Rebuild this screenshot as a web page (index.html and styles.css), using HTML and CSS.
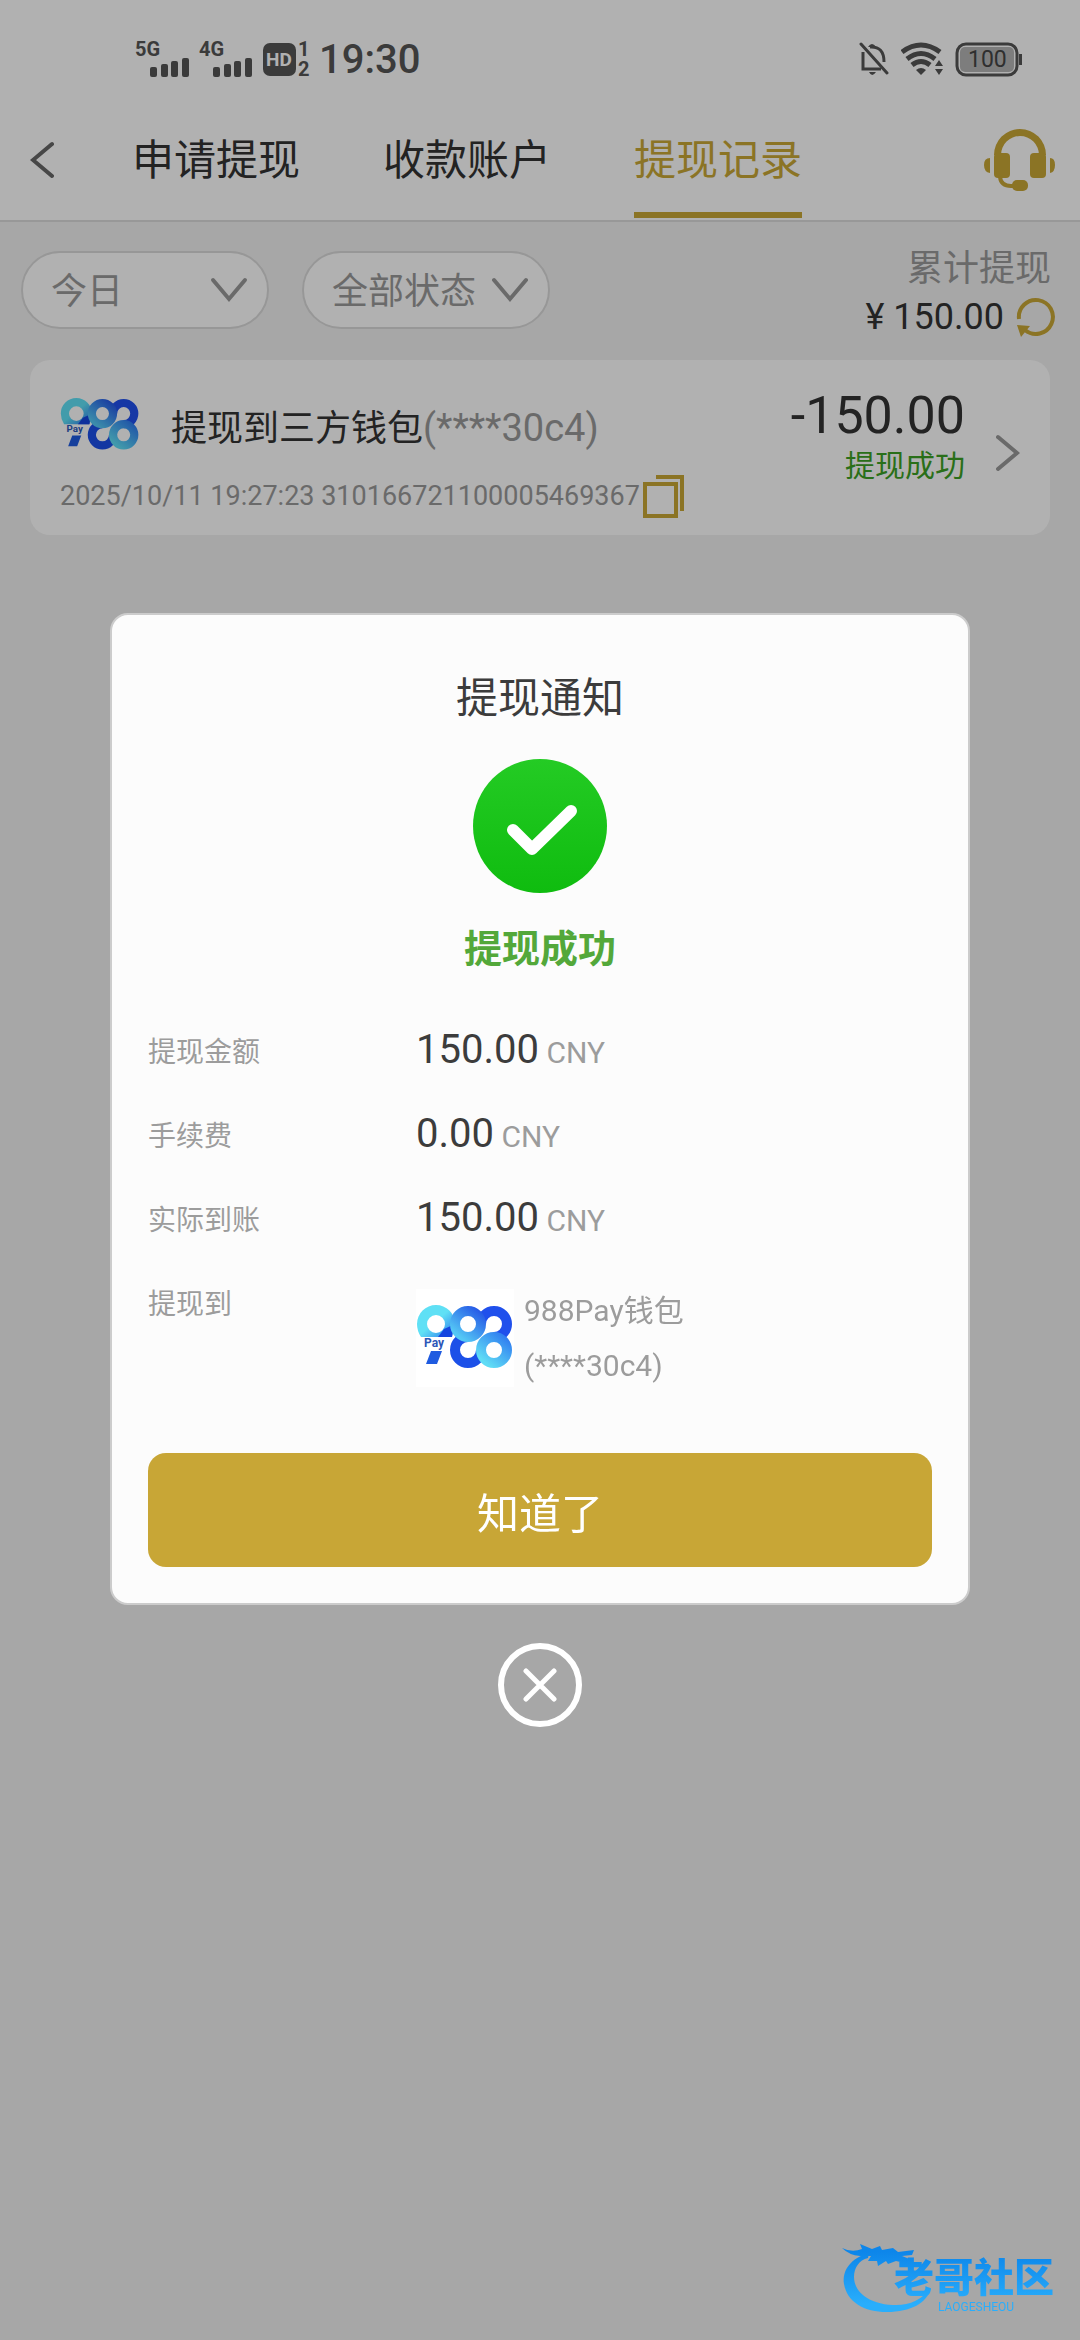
FILE: index.html
```html
<!DOCTYPE html>
<html lang="zh-CN">
<head>
    <meta charset="UTF-8">
    <meta name="viewport" content="width=device-width, initial-scale=1.0">
    <title>提现记录</title>
    <link rel="stylesheet" href="styles.css">
</head>
<body>
    <!-- shared 988Pay logo -->
    <svg class="defs" width="0" height="0" aria-hidden="true">
        <defs>
            <linearGradient id="gNine" x1="0" y1="0" x2="1" y2="1">
                <stop offset="0.5" stop-color="#5fe0f5"/>
                <stop offset="0.8" stop-color="#3f9df0"/>
                <stop offset="1" stop-color="#1546e0"/>
            </linearGradient>
            <linearGradient id="gMid" x1="1" y1="0" x2="0.2" y2="1">
                <stop offset="0" stop-color="#2558e6"/>
                <stop offset="1" stop-color="#55c8f5"/>
            </linearGradient>
            <linearGradient id="gLow" x1="1" y1="0" x2="0.2" y2="1">
                <stop offset="0" stop-color="#2f7cf0"/>
                <stop offset="1" stop-color="#5fdcf5"/>
            </linearGradient>
            <symbol id="logo988" viewBox="0 0 98 98">
                <path d="M5 48Q1 42 1 35A19 19 0 0 1 39 35L36 48ZM20 26a9 9 0 1 0 0 18a9 9 0 1 0 0-18Z" fill="url(#gNine)" fill-rule="evenodd"/>
                <path d="M22 48L28 40L37 36L36 48Z" fill="#1546e0"/>
                <path d="M65 35A13 13 0 1 1 78 48" fill="none" stroke="#2050ec" stroke-width="10"/>
                <path d="M52 48A13 13 0 1 0 65 61" fill="none" stroke="#1c50e8" stroke-width="10"/>
                <circle cx="52" cy="35" r="13" fill="none" stroke="url(#gMid)" stroke-width="10"/>
                <circle cx="78" cy="61" r="13" fill="none" stroke="url(#gLow)" stroke-width="10"/>
                <text x="8" y="58" class="logo-pay">Pay</text>
                <path d="M15 62H26L21 75H10Z" fill="#1f5be0"/>
            </symbol>
        </defs>
    </svg>

    <header class="header">
        <div class="statusbar">
            <div class="status-left">
                <svg class="signal" viewBox="0 -6 56 48">
                    <text x="0" y="15" class="net">5G</text>
                    <rect x="15" y="26" width="7" height="10" rx="2"/>
                    <rect x="26" y="23" width="7" height="13" rx="2"/>
                    <rect x="36" y="20" width="7" height="16" rx="2"/>
                    <rect x="47" y="17" width="7" height="19" rx="2"/>
                </svg>
                <svg class="signal" viewBox="0 -6 56 48">
                    <text x="0" y="15" class="net">4G</text>
                    <rect x="14" y="26" width="7" height="10" rx="2"/>
                    <rect x="25" y="23" width="7" height="13" rx="2"/>
                    <rect x="35" y="20" width="7" height="16" rx="2"/>
                    <rect x="46" y="17" width="7" height="19" rx="2"/>
                </svg>
                <svg class="hd" viewBox="0 -6 48 48">
                    <rect x="0" y="2" width="33" height="33" rx="7"/>
                    <text x="3" y="25" class="hd-text">HD</text>
                    <text x="35" y="15" class="net">1</text>
                    <text x="35" y="35" class="net">2</text>
                </svg>
                <span class="clock">19:30</span>
            </div>
            <div class="status-right">
                <svg width="30" height="34" viewBox="0 0 30 34" fill="none" stroke="#555" stroke-width="3">
                    <path d="M4 10V27H22M11 5Q25 4 25 20"/>
                    <path d="M2 2L28 31" stroke-linecap="round"/>
                    <path d="M9 5Q13 -1 17 5Z" fill="#555" stroke="none"/>
                    <path d="M10 30Q13 36 17 30Z" fill="#555" stroke="none"/>
                </svg>
                <svg width="42" height="34" viewBox="0 0 42 34" fill="none" stroke="#555" stroke-width="5">
                    <path d="M1 10Q20 -4 39 10M6 17Q20 6 34 17M11 23Q20 16 29 23"/>
                    <path d="M15 28Q20 24 25 28L20 33Z" fill="#555" stroke="none"/>
                    <path d="M34 24L38 18L42 24ZM34 27L38 33L42 27Z" fill="#555" stroke="none"/>
                </svg>
                <svg width="68" height="36" viewBox="0 0 68 36">
                    <rect x="2" y="3" width="60" height="31" rx="9" fill="none" stroke="#555" stroke-width="3"/>
                    <rect x="5" y="6" width="54" height="25" rx="5" fill="#b4b4b4"/>
                    <path d="M64 13h3v11h-3z" fill="#555"/>
                    <text x="13" y="26" class="battery">100</text>
                </svg>
            </div>
        </div>
        <nav class="nav">
            <button class="back" aria-label="返回">
                <svg width="24" height="38" viewBox="0 0 24 38"><path d="M22 3L3 19L22 35"/></svg>
            </button>
            <div class="tabs">
                <a href="#apply">申请提现</a>
                <a href="#account">收款账户</a>
                <a href="#record" class="active">提现记录</a>
            </div>
            <button class="service" aria-label="客服">
                <svg width="72" height="62" viewBox="0 0 72 62" fill="#c8a636">
                    <path d="M10 26A26 26 0 0 1 62 26H55A19 19 0 0 0 17 26Z"/>
                    <rect x="10" y="24" width="16" height="25" rx="4"/>
                    <rect x="46" y="24" width="16" height="25" rx="4"/>
                    <path d="M6 29V44Q0 43 0 36T6 29ZM66 29V44Q71 43 71 36T66 29Z"/>
                    <path d="M16 48Q17 57 27 57H32" fill="none" stroke="#c8a636" stroke-width="4"/>
                    <rect x="28" y="51" width="16" height="11" rx="5"/>
                </svg>
            </button>
        </nav>
    </header>

    <main>
        <div class="filters">
            <div class="select-box">
                <select aria-label="日期"><option>今日</option></select>
                <svg width="38" height="26" viewBox="0 0 38 26"><path d="M3 3L19 22L35 3"/></svg>
            </div>
            <div class="select-box">
                <select aria-label="状态"><option>全部状态</option></select>
                <svg width="38" height="26" viewBox="0 0 38 26"><path d="M3 3L19 22L35 3"/></svg>
            </div>
            <div class="total">
                <div class="total-label">累计提现</div>
                <div class="total-value">
                    <span>¥ 150.00</span>
                    <button aria-label="刷新">
                        <svg width="40" height="40" viewBox="0 0 40 40">
                            <path d="M3 22A17 17 0 1 1 9 33" fill="none" stroke="#c8a636" stroke-width="4"/>
                            <path d="M1 28L14 29L5 40Z" fill="#c8a636"/>
                        </svg>
                    </button>
                </div>
            </div>
        </div>

        <section class="card">
            <div class="card-info">
                <div class="card-title">
                    <svg class="card-logo"><use href="#logo988"/></svg>
                    <span>提现到三方钱包<span class="masked">(****30c4)</span></span>
                </div>
                <div class="card-meta">
                    <span>2025/10/11 19:27:23 310166721100005469367</span>
                    <button aria-label="复制">
                        <svg width="42" height="44" viewBox="0 0 42 44" fill="none" stroke="#c8a636" stroke-width="4">
                            <rect x="3" y="10" width="31" height="32"/>
                            <path d="M14 3H40V37"/>
                        </svg>
                    </button>
                </div>
            </div>
            <div class="card-amount">
                <div class="amount">-150.00</div>
                <div class="state">提现成功</div>
            </div>
            <svg class="arrow" width="24" height="38" viewBox="0 0 24 38"><path d="M2 3L21 19L2 35"/></svg>
        </section>
    </main>

    <div class="overlay">
        <div class="modal" role="dialog" aria-labelledby="modalTitle">
            <h2 id="modalTitle">提现通知</h2>
            <svg class="check" viewBox="0 0 134 134">
                <defs>
                    <linearGradient id="gCheck" x1="0" y1="0" x2="0" y2="1">
                        <stop offset="0" stop-color="#24cb24"/>
                        <stop offset="1" stop-color="#0fbc0f"/>
                    </linearGradient>
                </defs>
                <circle cx="67" cy="67" r="67" fill="url(#gCheck)"/>
                <path d="M40 71L59 90L98 52" fill="none" stroke="#fff" stroke-width="12" stroke-linecap="round" stroke-linejoin="round"/>
            </svg>
            <p class="success">提现成功</p>
            <dl class="detail">
                <dt>提现金额</dt>
                <dd><b>150.00</b> CNY</dd>
                <dt>手续费</dt>
                <dd><b>0.00</b> CNY</dd>
                <dt>实际到账</dt>
                <dd><b>150.00</b> CNY</dd>
                <dt>提现到</dt>
                <dd class="wallet">
                    <svg class="wallet-logo"><use href="#logo988"/></svg>
                    <span>988Pay钱包<br>(****30c4)</span>
                </dd>
            </dl>
            <button class="ok">知道了</button>
        </div>
        <button class="close" aria-label="关闭">
            <svg width="34" height="34" viewBox="0 0 34 34"><path d="M3 3L31 31M31 3L3 31"/></svg>
        </button>
    </div>

    <svg class="watermark" viewBox="0 0 222 74" width="222" height="74">
        <defs>
            <linearGradient id="gMark" gradientUnits="userSpaceOnUse" x1="0" y1="8" x2="0" y2="60">
                <stop offset="0" stop-color="#0d86ea"/>
                <stop offset="1" stop-color="#29aefc"/>
            </linearGradient>
        </defs>
        <g fill="url(#gMark)">
            <path d="M27 9C9 14 0 26 2 40C5 58 22 68 45 68C69 68 85 59 89 44C80 56 66 62 51 61C27 60 12 48 12 33C12 24 17 16 26 14Z"/>
            <path d="M0 4Q10 9 20 5L18 0L30 5L38 2L40 6L51 4L56 8L72 6L70 11L60 12L70 16L67 20L54 17L46 20L44 17L36 22L35 17L26 17L29 12L18 12Q7 11 0 4Z"/>
            <text x="52" y="48" class="mark-cn">老哥社区</text>
            <text x="96" y="67" class="mark-en">LAOGESHEOU</text>
        </g>
    </svg>
</body>
</html>
```

FILE: styles.css
```css
* {
    box-sizing: border-box;
}
body {
    margin: 0;
    min-height: 100vh;
    background: #f0f0f0;
    color: #333;
    font-family: Roboto, "Noto Sans CJK SC", sans-serif;
    font-size: 36px;
}
button {
    padding: 0;
    border: none;
    background: none;
    font-family: inherit;
    cursor: pointer;
}
svg {
    display: block;
    flex-shrink: 0;
}
.defs {
    position: absolute;
}

/* header */
.header {
    height: 222px;
    background: #fefefe;
    border-bottom: 2px solid #dadada;
}
.statusbar {
    display: flex;
    justify-content: space-between;
    align-items: center;
    height: 100px;
    padding: 18px 57px 0 135px;
}
.status-left,
.status-right {
    display: flex;
    align-items: center;
}
.status-left {
    gap: 8px;
    fill: #555;
}
.status-right {
    gap: 12px;
}
.signal {
    width: 56px;
    height: 48px;
}
.hd {
    width: 48px;
    height: 48px;
}
.net {
    font-size: 20px;
    font-weight: 700;
}
.hd-text {
    font-size: 19px;
    font-weight: 700;
    fill: #fefefe;
}
.battery {
    font-size: 23px;
    fill: #444;
}
.clock {
    color: #555;
    font-size: 40px;
    font-weight: 500;
}
.nav {
    display: flex;
    height: 120px;
    padding: 0 24px 0 30px;
    align-items: center;
}
.back path,
.arrow path,
.select-box path {
    fill: none;
    stroke: #666;
    stroke-width: 4;
    stroke-linecap: round;
}
.tabs {
    display: flex;
    flex: 1;
    gap: 83px;
    height: 100%;
    margin-left: 78px;
}
.tabs a {
    display: flex;
    align-items: center;
    border-bottom: 6px solid transparent;
    height: 118px;
    color: #333;
    font-size: 42px;
    text-decoration: none;
}
.tabs a.active {
    color: #c8a636;
    border-bottom-color: #c8a636;
}

/* filters */
.filters {
    display: flex;
    gap: 33px;
    height: 138px;
    padding: 29px 24px 0 21px;
}
.select-box {
    position: relative;
    width: 248px;
    height: 78px;
}
.select-box select {
    appearance: none;
    width: 100%;
    height: 100%;
    padding: 3px 0 0 28px;
    border: 2px solid #d9d9d9;
    border-radius: 39px;
    background: #fefefe;
    color: #999;
    font-family: inherit;
    font-size: 36px;
}
.select-box svg {
    position: absolute;
    right: 21px;
    top: 26px;
    pointer-events: none;
}
.select-box path {
    stroke: #999;
}
.total {
    margin-top: -6px;
    margin-left: auto;
}
.total-label {
    padding-right: 5px;
    color: #999;
    line-height: 48px;
    text-align: right;
}
.total-value {
    display: flex;
    align-items: center;
    justify-content: flex-end;
    gap: 12px;
    height: 48px;
}

/* record card */
.card {
    display: flex;
    margin: 0 30px;
    padding: 24px 30px 13px;
    border-radius: 20px;
    background: #fefefe;
}
.card-title {
    display: flex;
    align-items: center;
    gap: 31px;
    height: 82px;
}
.card-logo {
    width: 80px;
    height: 80px;
}
.logo-pay {
    font-size: 12px;
    font-weight: 700;
    fill: #2c56b8;
}
.masked {
    color: #999;
    font-size: 38px;
}
.card-meta {
    display: flex;
    align-items: center;
    gap: 2px;
    height: 52px;
    margin-top: 4px;
    color: #999;
    font-size: 27px;
}
.card-amount {
    margin-left: auto;
    text-align: right;
}
.amount {
    font-size: 52px;
    line-height: 64px;
}
.state {
    color: #3c9f25;
    font-size: 30px;
    line-height: 36px;
}
.arrow {
    align-self: center;
    margin-left: 31px;
}
.arrow path {
    stroke: #999;
}

/* popup */
.overlay {
    position: fixed;
    inset: 0;
    display: flex;
    flex-direction: column;
    align-items: center;
    justify-content: center;
    gap: 38px;
    padding: 0 110px;
    background: rgba(0, 0, 0, 0.3);
}
.modal {
    width: 100%;
    max-width: 860px;
    padding: 54px 36px 36px;
    border: 2px solid #ccc;
    border-radius: 18px;
    background: #fcfcfc;
}
.modal h2 {
    margin: 0 0 30px;
    color: #3c3c3c;
    font-size: 42px;
    font-weight: 400;
    line-height: 60px;
    text-align: center;
}
.check {
    width: 134px;
    height: 134px;
    margin: 0 auto;
}
.success {
    margin: 28px 0 34px;
    color: #53a83a;
    font-size: 38px;
    font-weight: 700;
    line-height: 56px;
    text-align: center;
}
.detail {
    display: grid;
    grid-template-columns: 268px 1fr;
    margin: 0 0 60px;
    color: #9c9c9c;
    line-height: 84px;
}
.detail dt {
    font-size: 28px;
}
.detail dd {
    margin: 0;
    font-size: 30px;
}
.detail b {
    color: #3c3c3c;
    font-size: 40px;
    font-weight: 400;
    line-height: 40px;
}
.detail .wallet {
    display: flex;
    align-items: center;
    gap: 10px;
    padding-top: 20px;
    line-height: 55px;
}
.wallet-logo {
    width: 98px;
    height: 98px;
    background: #fff;
}
.ok {
    width: 100%;
    height: 114px;
    border-radius: 18px;
    background: #c8a636;
    color: #fff;
    font-size: 42px;
}
.close {
    display: flex;
    align-items: center;
    justify-content: center;
    width: 84px;
    height: 84px;
    border: 6px solid #fff;
    border-radius: 50%;
}
.close path {
    stroke: #fff;
    stroke-width: 5;
    stroke-linecap: round;
}

.watermark {
    position: fixed;
    right: 16px;
    bottom: 22px;
}
.mark-cn {
    font-size: 40px;
    font-weight: 900;
}
.mark-en {
    font-size: 12px;
}
```
